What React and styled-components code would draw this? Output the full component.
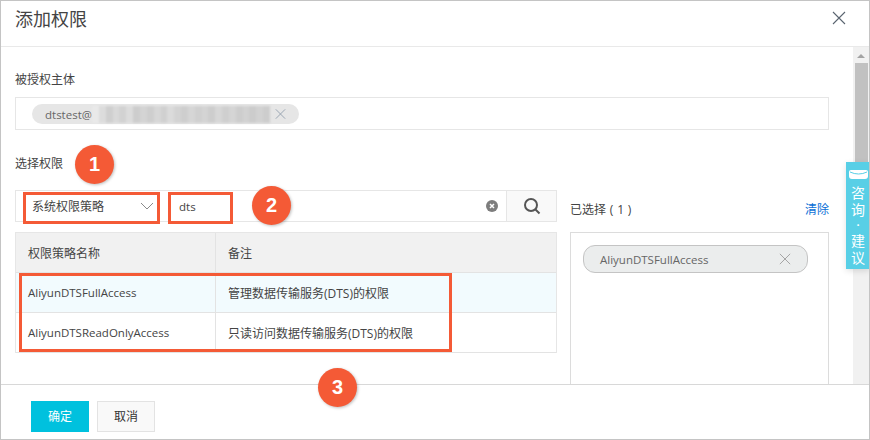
import styled, { createGlobalStyle } from 'styled-components';

const GlobalStyle = createGlobalStyle`
  html, body {
    margin: 0;
    padding: 0;
    background: #fff;
  }
  body {
    font-family: 'Open Sans', 'Noto Sans CJK SC', sans-serif;
    font-size: 12px;
    color: #333;
  }
`;

const mosaicShades = [
  '#e9e9e9', '#dcdcdc', '#cfcfcf', '#d9d9d9', '#d2d2d2', '#dcdcdc', '#cdcdcd', '#d4d4d4', '#cecece',
  '#d7d7d7', '#d0d0d0', '#dbdbdb', '#d3d3d3', '#cecece', '#d6d6d6', '#d0d0d0', '#d4d4d4', '#cdcdcd',
  '#d7d7d7', '#cfcfcf', '#d5d5d5', '#cdcdcd', '#d2d2d2', '#cccccc', '#d2d2d2', '#cdcdcd',
];

const rows = [
  { name: 'AliyunDTSFullAccess', note: '管理数据传输服务(DTS)的权限', active: true },
  { name: 'AliyunDTSReadOnlyAccess', note: '只读访问数据传输服务(DTS)的权限' },
];

function CrossIcon({ size, color }) {
  return (
    <svg width={size} height={size} viewBox="0 0 14 14" fill="none" stroke={color} strokeWidth="1.1">
      <path d="M1 1l12 12M13 1L1 13" />
    </svg>
  );
}

export default function App() {
  return (
    <Dialog>
      <GlobalStyle />
      <Header>
        <Title>添加权限</Title>
        <CrossIcon size={14} color="#5a6470" />
      </Header>

      <Middle>
        <Content>
          <FieldLabel>被授权主体</FieldLabel>
          <PrincipalBox>
            <PrincipalChip>
              <Latin>dtstest@</Latin>
              <Mosaic>
                {mosaicShades.map((shade, i) => (
                  <MosaicCell key={i} $shade={shade} />
                ))}
              </Mosaic>
              <CrossIcon size={12} color="#8f9cab" />
            </PrincipalChip>
          </PrincipalBox>

          <PickLabelRow>
            <FieldLabel>选择权限</FieldLabel>
            <Badge $left={60} $top={-12}>1</Badge>
          </PickLabelRow>

          <Columns>
            <LeftColumn>
              <SearchBar>
                <SelectBox>
                  系统权限策略
                  <svg width="14" height="8" viewBox="0 0 14 8" fill="none" stroke="#8a8a8a" strokeWidth="1">
                    <path d="M1 1l6 6 6-6" />
                  </svg>
                </SelectBox>
                <KeywordBox>
                  <Latin>dts</Latin>
                </KeywordBox>
                <Badge $left={236} $top={-5}>2</Badge>
                <ClearIcon>
                  <svg width="12" height="12" viewBox="0 0 12 12">
                    <circle cx="6" cy="6" r="6" fill="#7d7d7d" />
                    <path d="M4 4l4 4M8 4l-4 4" stroke="#fff" strokeWidth="1.5" />
                  </svg>
                </ClearIcon>
                <SearchButton>
                  <svg width="18" height="18" viewBox="0 0 18 18" fill="none" stroke="#555" strokeWidth="2">
                    <circle cx="8" cy="8" r="6" />
                    <path d="M12.5 12.5l4 4" />
                  </svg>
                </SearchButton>
              </SearchBar>

              <Table>
                <HeadRow>
                  <NameCell>权限策略名称</NameCell>
                  <NoteCell>备注</NoteCell>
                </HeadRow>
                {rows.map((row) => (
                  <BodyRow key={row.name} $active={row.active}>
                    <NameCell>
                      <Latin>{row.name}</Latin>
                    </NameCell>
                    <NoteCell>{row.note}</NoteCell>
                  </BodyRow>
                ))}
                <RowsMarker />
              </Table>
            </LeftColumn>

            <RightColumn>
              <SelectedHeader>
                <SelectedCount>已选择 ( 1 )</SelectedCount>
                <ClearLink>清除</ClearLink>
              </SelectedHeader>
              <SelectedPanel>
                <SelectedChip>
                  <Latin>AliyunDTSFullAccess</Latin>
                  <CrossIcon size={12} color="#a0a0a0" />
                </SelectedChip>
              </SelectedPanel>
            </RightColumn>
          </Columns>
        </Content>

        <Scrollbar>
          <ArrowUp />
          <Thumb />
        </Scrollbar>
      </Middle>

      <Footer>
        <Badge $left={317} $top={-17}>3</Badge>
        <PrimaryButton>确定</PrimaryButton>
        <PlainButton>取消</PlainButton>
      </Footer>

      <SideTab>
        <svg width="19" height="9" viewBox="0 0 19 9">
          <path d="M0 2q0-2 2-2h15q2 0 2 2v4q0 3-3 3H3q-3 0-3-3z" fill="#fff" />
          <path d="M1 2q8.500 4 17 0" fill="none" stroke="#58cfe6" strokeWidth="1" />
        </svg>
        <SideText $first>咨</SideText>
        <SideText>询</SideText>
        <SideDot>·</SideDot>
        <SideText>建</SideText>
        <SideText>议</SideText>
      </SideTab>
    </Dialog>
  );
}

const Dialog = styled.div`
  position: relative;
  box-sizing: border-box;
  width: 870px;
  height: 440px;
  display: flex;
  flex-direction: column;
  overflow: hidden;
  background: #fff;
  border: 1px solid #c4c4c4;
`;

const Header = styled.div`
  box-sizing: border-box;
  flex: none;
  height: 46px;
  display: flex;
  justify-content: space-between;
  padding: 10px 23px 0 14px;
  border-bottom: 1px solid #e9e9e9;
`;

const Title = styled.div`
  font-size: 18px;
  line-height: 17px;
  color: #444;
`;

const Latin = styled.span`
  font-size: 11.5px;
`;

const Middle = styled.div`
  flex: none;
  height: 337px;
  display: flex;
  overflow: hidden;
`;

const Content = styled.div`
  box-sizing: border-box;
  width: 852px;
  padding: 26px 24px 0 14px;
`;

const FieldLabel = styled.div`
  font-size: 12px;
  line-height: 14px;
  color: #444;
`;

const PrincipalBox = styled.div`
  box-sizing: border-box;
  height: 33px;
  margin-top: 10px;
  padding: 6px 16px;
  border: 1px solid #e6e6e6;
`;

const PrincipalChip = styled.div`
  box-sizing: border-box;
  width: 267px;
  height: 20px;
  display: flex;
  align-items: center;
  padding: 0 13px;
  border-radius: 10px;
  background: #e6e6e6;
  color: #666;
`;

const Mosaic = styled.div`
  width: 178px;
  height: 17px;
  flex: none;
  display: flex;
  margin: 0 5px 0 0;
  filter: blur(1px);
  overflow: hidden;
`;

const MosaicCell = styled.i`
  flex: 1;
  background: ${(props) => props.$shade};
`;

const PickLabelRow = styled.div`
  position: relative;
  margin-top: 27px;
`;

const Badge = styled.div`
  position: absolute;
  left: ${(props) => props.$left}px;
  top: ${(props) => props.$top}px;
  width: 39px;
  height: 39px;
  border-radius: 50%;
  background: #f45a36;
  box-shadow: 1px 1px 3px rgba(0, 0, 0, 0.25);
  color: #fff;
  font-family: 'Liberation Sans', sans-serif;
  font-size: 20px;
  font-weight: 700;
  line-height: 39px;
  text-align: center;
  z-index: 2;
`;

const Columns = styled.div`
  display: flex;
  gap: 13px;
  margin-top: 19px;
`;

const LeftColumn = styled.div`
  width: 542px;
  flex: none;
`;

const SearchBar = styled.div`
  position: relative;
  box-sizing: border-box;
  height: 32px;
  display: flex;
  align-items: flex-start;
  padding: 1px 0 0 7px;
  border: 1px solid #e6e6e6;
`;

const SelectBox = styled.div`
  box-sizing: border-box;
  width: 137px;
  height: 32px;
  display: flex;
  align-items: center;
  justify-content: space-between;
  padding: 0 3px 5px 6px;
  border: 3px solid #f45a36;
  background: #fff;
  color: #444;
  z-index: 1;
`;

const KeywordBox = styled.div`
  box-sizing: border-box;
  width: 65px;
  height: 32px;
  margin-left: 8px;
  padding: 3px 8px;
  border: 3px solid #f45a36;
  background: #fff;
  color: #444;
  z-index: 1;
`;

const ClearIcon = styled.div`
  margin: 7px 8px 0 auto;
  height: 12px;
`;

const SearchButton = styled.div`
  box-sizing: border-box;
  width: 50px;
  height: 30px;
  margin-top: -1px;
  display: flex;
  align-items: center;
  justify-content: center;
  border-left: 1px solid #e6e6e6;
  background: #f9f9f9;
`;

const Table = styled.div`
  position: relative;
  margin-top: 10px;
  border: 1px solid #e6e6e6;
  border-bottom-width: 0;
`;

const HeadRow = styled.div`
  display: flex;
  height: 39px;
  align-items: stretch;
  background: #f1f1f1;
  border-bottom: 1px solid #e3e3e3;
  color: #444;
`;

const BodyRow = styled.div`
  display: flex;
  height: 39px;
  background: ${(props) => (props.$active ? '#f2fbfe' : '#fff')};
  border-bottom: 1px solid #e3e3e3;
  color: #444;
`;

const NameCell = styled.div`
  box-sizing: border-box;
  width: 200px;
  display: flex;
  align-items: center;
  padding-left: 12px;
  border-right: 1px solid #e3e3e3;
`;

const NoteCell = styled.div`
  flex: 1;
  display: flex;
  align-items: center;
  padding-left: 12px;
`;

const RowsMarker = styled.div`
  position: absolute;
  left: 3px;
  top: 40px;
  width: 433px;
  height: 79px;
  box-sizing: border-box;
  border: 3px solid #f45a36;
`;

const RightColumn = styled.div`
  flex: 1;
  min-width: 0;
`;

const SelectedHeader = styled.div`
  height: 32px;
  display: flex;
  justify-content: space-between;
  align-items: flex-end;
  padding-bottom: 4px;
  box-sizing: border-box;
  line-height: 16px;
  color: #444;
`;

const SelectedCount = styled.span`
  word-spacing: 0.7px;
`;

const ClearLink = styled.span`
  color: #0a6fd6;
`;

const SelectedPanel = styled.div`
  box-sizing: border-box;
  height: 170px;
  margin-top: 10px;
  padding: 12px;
  border: 1px solid #dcdcdc;
`;

const SelectedChip = styled.div`
  box-sizing: border-box;
  width: 225px;
  height: 28px;
  display: flex;
  align-items: center;
  justify-content: space-between;
  padding: 0 16px;
  border: 1px solid #c4c4c4;
  border-radius: 12px;
  background: #ebeded;
  color: #666;
`;

const Scrollbar = styled.div`
  flex: 1;
  display: flex;
  flex-direction: column;
  align-items: center;
  background: #f1f1f1;
`;

const ArrowUp = styled.div`
  margin-top: 7px;
  border-left: 4px solid transparent;
  border-right: 4px solid transparent;
  border-bottom: 4px solid #a3a3a3;
`;

const Thumb = styled.div`
  width: 13px;
  height: 118px;
  margin-top: 5px;
  background: #c1c1c1;
`;

const Footer = styled.div`
  position: relative;
  flex: 1;
  display: flex;
  align-items: flex-start;
  gap: 8px;
  padding: 16px 0 0 30px;
  border-top: 1px solid #d8d8d8;
`;

const PrimaryButton = styled.div`
  box-sizing: border-box;
  width: 58px;
  height: 31px;
  line-height: 31px;
  text-align: center;
  background: #00c1de;
  color: #fff;
`;

const PlainButton = styled.div`
  box-sizing: border-box;
  width: 58px;
  height: 31px;
  line-height: 29px;
  text-align: center;
  background: #f9f9f9;
  border: 1px solid #e3e3e3;
  color: #333;
`;

const SideTab = styled.div`
  position: absolute;
  right: -1px;
  top: 161px;
  box-sizing: border-box;
  width: 24px;
  height: 107px;
  display: flex;
  flex-direction: column;
  align-items: center;
  padding-top: 8px;
  background: #58cfe6;
  box-shadow: 0 2px 6px rgba(0, 0, 0, 0.12);
  color: #fff;
  font-family: Lato, 'Noto Sans CJK SC', sans-serif;
  z-index: 3;
`;

const SideText = styled.div`
  font-size: 14px;
  line-height: 17px;
  margin-top: ${(props) => (props.$first ? '5px' : '0')};
`;

const SideDot = styled.div`
  font-size: 12px;
  line-height: 14px;
`;
